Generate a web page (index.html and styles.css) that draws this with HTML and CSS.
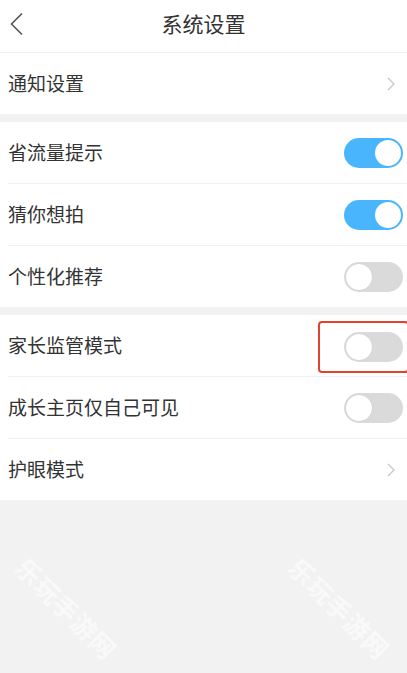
FILE: index.html
```html
<!DOCTYPE html>
<html lang="zh-CN">
<head>
    <meta charset="UTF-8">
    <meta name="viewport" content="width=device-width, initial-scale=1.0">
    <title>系统设置</title>
    <link rel="stylesheet" href="styles.css">
</head>
<body>
    <div class="page">
        <div class="header">
            <svg class="back" width="16" height="24" viewBox="0 0 16 24">
                <path d="M13 1.5 L2.5 12 L13 22.5" fill="none" stroke="#555" stroke-width="1.6"/>
            </svg>
            <h1 class="title">系统设置</h1>
        </div>

        <div class="group">
            <div class="row">
                <span class="label">通知设置</span>
                <svg class="arrow" width="8" height="14" viewBox="0 0 8 14">
                    <path d="M1 1 L7 7 L1 13" fill="none" stroke="#c6c6c6" stroke-width="1.2"/>
                </svg>
            </div>
        </div>

        <div class="group">
            <div class="row">
                <span class="label">省流量提示</span>
                <span class="switch on"></span>
            </div>
            <div class="row">
                <span class="label">猜你想拍</span>
                <span class="switch on"></span>
            </div>
            <div class="row">
                <span class="label">个性化推荐</span>
                <span class="switch"></span>
            </div>
        </div>

        <div class="group">
            <div class="row">
                <span class="label">家长监管模式</span>
                <span class="mark"><span class="switch"></span></span>
            </div>
            <div class="row">
                <span class="label">成长主页仅自己可见</span>
                <span class="switch"></span>
            </div>
            <div class="row">
                <span class="label">护眼模式</span>
                <svg class="arrow" width="8" height="14" viewBox="0 0 8 14">
                    <path d="M1 1 L7 7 L1 13" fill="none" stroke="#c6c6c6" stroke-width="1.2"/>
                </svg>
            </div>
        </div>

        <div class="watermark left">乐玩手游网</div>
        <div class="watermark right">乐玩手游网</div>
    </div>
</body>
</html>
```

FILE: styles.css
```css
body {
    margin: 0;
    background-color: #f2f2f2;
    font-family: "Noto Sans CJK SC", "Noto Sans", sans-serif;
    color: #333;
}
.page {
    position: relative;
    width: 407px;
    height: 673px;
    overflow: hidden;
}
.header {
    height: 53px;
    box-sizing: border-box;
    padding-bottom: 6px;
    background: white;
    border-bottom: 1px solid #f0f0f0;
    display: flex;
    align-items: center;
    justify-content: center;
    position: relative;
}
.back {
    position: absolute;
    left: 9px;
    top: 12px;
}
.title {
    margin: 0;
    font-size: 21px;
    font-weight: normal;
    color: #333;
    line-height: 1;
}
.group {
    background: white;
    padding-left: 8px;
    margin-bottom: 8px;
}
.row {
    height: 61px;
    display: flex;
    align-items: center;
    justify-content: space-between;
    border-bottom: 1px solid #f0f0f0;
}
.row:last-child {
    border-bottom: none;
}
.label {
    font-size: 19px;
    line-height: 1;
    padding-bottom: 3px;
}
.arrow {
    margin-right: 12px;
}
.switch {
    position: relative;
    width: 59px;
    height: 30px;
    border-radius: 15px;
    background: #dadada;
    margin-right: 4px;
    box-sizing: border-box;
}
.switch::after {
    content: "";
    position: absolute;
    left: 2px;
    top: 2px;
    width: 26px;
    height: 26px;
    border-radius: 50%;
    background: white;
    box-shadow: 0 0 1px rgba(0, 0, 0, 0.15);
}
.switch.on {
    background: #48b5fc;
}
.switch.on::after {
    left: 31px;
    box-shadow: none;
}
.mark {
    display: flex;
    align-items: center;
    justify-content: flex-end;
    width: 87px;
    height: 48px;
    border: 2px solid #e2432e;
    border-radius: 4px;
    margin-right: -2px;
    margin-top: 3px;
}
.watermark {
    position: absolute;
    top: 594px;
    width: 140px;
    text-align: center;
    white-space: nowrap;
    font-size: 25px;
    line-height: 28px;
    font-weight: bold;
    color: rgba(255, 255, 255, 0.6);
    transform: rotate(45deg);
    letter-spacing: 1px;
}
.watermark.left {
    left: -3px;
}
.watermark.right {
    left: 270px;
}
```
